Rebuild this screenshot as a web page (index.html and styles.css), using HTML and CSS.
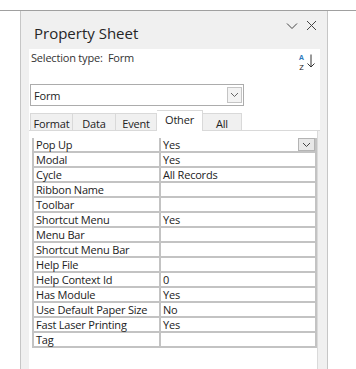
FILE: index.html
```html
<!DOCTYPE html>
<html lang="en">
<head>
    <meta charset="UTF-8">
    <meta name="viewport" content="width=device-width, initial-scale=1.0">
    <link rel="stylesheet" href="styles.css">
</head>
<body>

<div class="top-rule"></div>

<div class="sheet">
    <div class="sheet-head">
        <h2 class="sheet-title">Property Sheet</h2>
        <div class="sheet-controls">
            <svg width="12" height="8" viewBox="0 0 12 8"><path d="M1 1.5 L6 6.5 L11 1.5" fill="none" stroke="#444" stroke-width="1"/></svg>
            <svg width="11" height="11" viewBox="0 0 11 11"><path d="M1 1 L10 10 M10 1 L1 10" fill="none" stroke="#444" stroke-width="1"/></svg>
        </div>
    </div>

    <div class="sheet-top">
        <div class="selection-row">
            <span class="selection-label">Selection type:&nbsp; Form</span>
            <div class="sort-icon">
                <div class="sort-letters">
                    <span class="sort-a">A</span>
                    <span class="sort-z">Z</span>
                </div>
                <svg width="8" height="14" viewBox="0 0 8 14"><path d="M4 0.5 V13 M0.5 9.5 L4 13 L7.5 9.5" fill="none" stroke="#333" stroke-width="1"/></svg>
            </div>
        </div>

        <div class="combo">
            <span class="combo-text">Form</span>
            <span class="combo-btn">
                <svg width="9" height="6" viewBox="0 0 9 6"><path d="M1 1 L4.5 4.5 L8 1" fill="none" stroke="#666" stroke-width="1"/></svg>
            </span>
        </div>

        <div class="tabs">
            <div class="tab">Format</div>
            <div class="tab">Data</div>
            <div class="tab">Event</div>
            <div class="tab active">Other</div>
            <div class="tab">All</div>
        </div>
    </div>

    <div class="tab-panel">
        <table class="props">
            <tr>
                <td class="prop-name">Pop Up</td>
                <td class="prop-value">
                    <div class="value-wrap">
                        <span>Yes</span>
                        <span class="cell-btn">
                            <svg width="9" height="6" viewBox="0 0 9 6"><path d="M1 1 L4.5 4.5 L8 1" fill="none" stroke="#444" stroke-width="1"/></svg>
                        </span>
                    </div>
                </td>
            </tr>
            <tr><td class="prop-name">Modal</td><td class="prop-value">Yes</td></tr>
            <tr><td class="prop-name">Cycle</td><td class="prop-value">All Records</td></tr>
            <tr><td class="prop-name">Ribbon Name</td><td class="prop-value"></td></tr>
            <tr><td class="prop-name">Toolbar</td><td class="prop-value"></td></tr>
            <tr><td class="prop-name">Shortcut Menu</td><td class="prop-value">Yes</td></tr>
            <tr><td class="prop-name">Menu Bar</td><td class="prop-value"></td></tr>
            <tr><td class="prop-name">Shortcut Menu Bar</td><td class="prop-value"></td></tr>
            <tr><td class="prop-name">Help File</td><td class="prop-value"></td></tr>
            <tr><td class="prop-name">Help Context Id</td><td class="prop-value">0</td></tr>
            <tr><td class="prop-name">Has Module</td><td class="prop-value">Yes</td></tr>
            <tr><td class="prop-name">Use Default Paper Size</td><td class="prop-value">No</td></tr>
            <tr><td class="prop-name">Fast Laser Printing</td><td class="prop-value">Yes</td></tr>
            <tr><td class="prop-name">Tag</td><td class="prop-value"></td></tr>
        </table>
    </div>
</div>

</body>
</html>
```

FILE: styles.css
```css
body {
    margin: 0;
    background-color: #ffffff;
    font-family: "Open Sans", "Noto Sans", sans-serif;
    font-size: 11px;
    letter-spacing: -0.2px;
    color: #222;
    overflow: hidden;
}

.top-rule {
    height: 10px;
    border-bottom: 1px solid #a0a0a0;
}

.sheet {
    margin-left: 20px;
    width: 306px;
    height: 358px;
    background-color: #f0f0f0;
    border-left: 1px solid #c6c6c6;
    border-right: 1px solid #c6c6c6;
}

.sheet-head {
    height: 38px;
    display: flex;
    justify-content: space-between;
    align-items: flex-start;
}

.sheet-title {
    margin: 0;
    padding: 12px 0 0 13px;
    font-size: 15px;
    line-height: 20px;
    letter-spacing: 0;
    font-weight: normal;
    color: #262626;
}

.sheet-controls {
    display: flex;
    align-items: center;
    gap: 8px;
    padding: 9px 10px 0 0;
}

.sheet-top {
    margin-left: 8px;
    width: 291px;
    background-color: #ffffff;
}

.selection-row {
    height: 35px;
    display: flex;
    justify-content: space-between;
    align-items: flex-start;
    padding: 0 5px 0 2px;
    box-sizing: border-box;
}

.selection-label {
    padding-top: 1px;
    line-height: 15px;
    color: #333;
}

.sort-icon {
    display: flex;
    align-items: flex-start;
    gap: 2px;
    padding-top: 5px;
}

.sort-letters {
    display: flex;
    flex-direction: column;
    width: 7px;
    text-align: center;
    letter-spacing: 0;
}

.sort-a {
    color: #2f7bbd;
    font-weight: bold;
    font-size: 7px;
    line-height: 8px;
}

.sort-z {
    color: #222;
    font-size: 8px;
    line-height: 9px;
}

.combo {
    margin-left: 1px;
    width: 214px;
    height: 22px;
    box-sizing: border-box;
    border: 1px solid #acacac;
    display: flex;
    align-items: center;
    justify-content: space-between;
    padding: 0 1px 0 3px;
}

.combo-text {
    color: #222;
}

.combo-btn {
    width: 15px;
    height: 16px;
    box-sizing: border-box;
    border: 1px solid #c4c4c4;
    background-color: #f3f3f3;
    display: flex;
    align-items: center;
    justify-content: center;
}

.tabs {
    margin-top: 5px;
    padding-left: 1px;
    height: 19px;
    display: flex;
    align-items: flex-end;
    border-bottom: 1px solid #d9d9d9;
}

.tab {
    height: 17px;
    box-sizing: border-box;
    padding: 2px 0 0;
    line-height: 15px;
    background-color: #f0f0f0;
    border: 1px solid #d9d9d9;
    border-bottom: none;
    border-left: none;
    text-align: center;
}

.tab:first-child {
    border-left: 1px solid #d9d9d9;
}

.tab:nth-child(1) { width: 43px; }
.tab:nth-child(2) { width: 43px; }
.tab:nth-child(3) { width: 41px; }
.tab:nth-child(5) { width: 39px; }

.tab.active {
    width: 46px;
    height: 21px;
    margin-bottom: -1px;
    padding-top: 1px;
    background-color: #ffffff;
}

.tab-panel {
    margin-left: 8px;
    width: 289px;
    height: 238px;
    box-sizing: border-box;
    background-color: #ffffff;
    border-right: 1px solid #dadada;
    padding: 7px 0 0 3px;
}

.props {
    border-collapse: collapse;
    width: 285px;
}

.props td {
    height: 13px;
    padding: 1px 0 0 2px;
    box-sizing: border-box;
    line-height: 12px;
    border: 2px solid #c3c3c3;
    border-top: none;
    white-space: nowrap;
    color: #222;
}

.prop-name {
    width: 127px;
}

.value-wrap {
    display: flex;
    justify-content: space-between;
    align-items: flex-start;
}

.cell-btn {
    width: 17px;
    height: 13px;
    margin-top: -1px;
    box-sizing: border-box;
    border: 1px solid #b4b4b4;
    background-color: #e8e8e8;
    display: flex;
    align-items: center;
    justify-content: center;
}
```
